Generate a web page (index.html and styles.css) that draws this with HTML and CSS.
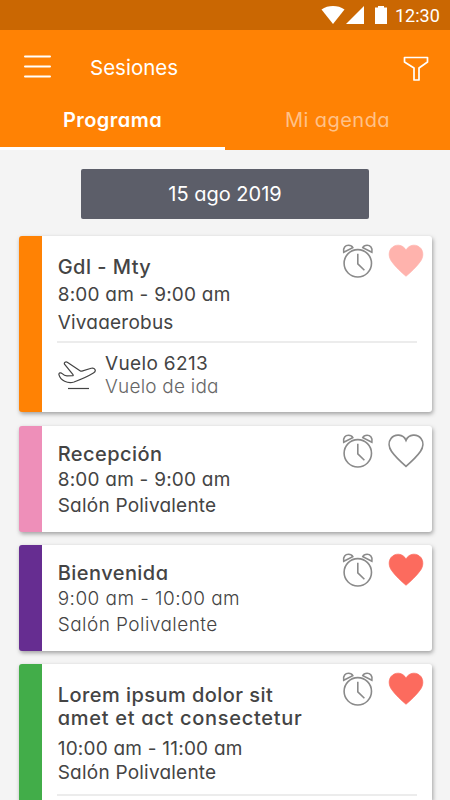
FILE: index.html
```html
<!DOCTYPE html>
<html lang="es">
<head>
    <meta charset="UTF-8">
    <meta name="viewport" content="width=device-width, initial-scale=1.0">
    <title>Sesiones</title>
    <link rel="stylesheet" href="styles.css">
</head>
<body>
    <svg class="sprite" width="0" height="0">
        <symbol id="alarm" viewBox="0 0 32 36">
            <circle cx="15.800" cy="20.300" r="13.700"/>
            <path d="M15.800 10.800v10l6.600 6.500"/>
            <path d="M1.700 9.300C.8 4.700 3.500 2.300 6.500 2.300c2 0 3.600.8 4.300 2.300z"/>
            <path d="M29.900 9.300c.9-4.600-1.800-7-4.800-7-2 0-3.600.8-4.300 2.300z"/>
        </symbol>
        <symbol id="heart" viewBox="0 0 36 34">
            <path d="M18 6.300C15.200 0 6.800-.4 3 4.600c-2.800 3.700-2.200 9 .6 12.900C7.300 22.700 13 28 18 32.300c5-4.300 10.700-9.600 14.400-14.800 2.800-3.900 3.400-9.200.6-12.900C29.200-.4 20.800 0 18 6.300z"/>
        </symbol>
    </svg>

    <div class="status-bar">
        <svg class="wifi" width="24" height="18" viewBox="0 0 24 18"><path d="M12 18L.5 3.500c6.500-4.600 16.500-4.600 23 0z"/></svg>
        <svg class="signal" width="18" height="18" viewBox="0 0 18 18"><path d="M18 0v18H0z"/></svg>
        <svg class="battery" width="12" height="18" viewBox="0 0 12 18"><path d="M0 1.500h3V0h6v1.500h3V18H0z"/></svg>
        <span class="clock">12:30</span>
    </div>

    <header class="header">
        <div class="toolbar">
            <svg class="menu-icon" width="27" height="24" viewBox="0 0 27 24"><path d="M1 1.500h25M1 11.500h25M1 21.500h25"/></svg>
            <h1>Sesiones</h1>
            <svg class="filter-icon" width="26" height="26" viewBox="0 0 26 26"><path d="M1.500 1.500h23v4.500l-8.500 6v12h-5v-12l-9.500-6z"/></svg>
        </div>
        <nav class="tabs">
            <a class="tab active">Programa</a>
            <a class="tab">Mi agenda</a>
        </nav>
    </header>

    <main>
        <div class="date">15 ago 2019</div>

        <article class="card orange flight-card">
            <div class="info">
                <h2>Gdl - Mty</h2>
                <p>8:00 am - 9:00 am</p>
                <p>Vivaaerobus</p>
                <div class="flight">
                    <svg width="40" height="32" viewBox="0 0 40 32"><path d="M7.500 3.200C6.800 1.600 8.700.3 10.300 1.300L23 9.800c.6.4 1.200.5 1.900.3l9.300-2.800c3.500-1 5.800 2.600 2.200 4.800-4.700 2.900-13.400 6.800-19.400 8.900-6.500 2-13.500-1.700-15-7.200-.5-1.900 1.700-2.700 3.200-1.200 1.700 1.800 3 2.300 4.700 2.300l6.100-.2c.4-.2.3-.5 0-1z"/><path d="M11 27.500h21"/></svg>
                    <div>
                        <p class="flight-number">Vuelo 6213</p>
                        <p class="flight-type">Vuelo de ida</p>
                    </div>
                </div>
            </div>
            <div class="actions">
                <svg class="alarm"><use href="#alarm"/></svg>
                <svg class="heart faded"><use href="#heart"/></svg>
            </div>
        </article>

        <article class="card pink">
            <div class="info">
                <h2>Recepción</h2>
                <p>8:00 am - 9:00 am</p>
                <p>Salón Polivalente</p>
            </div>
            <div class="actions">
                <svg class="alarm"><use href="#alarm"/></svg>
                <svg class="heart outline"><use href="#heart"/></svg>
            </div>
        </article>

        <article class="card purple">
            <div class="info">
                <h2>Bienvenida</h2>
                <p>9:00 am - 10:00 am</p>
                <p>Salón Polivalente</p>
            </div>
            <div class="actions">
                <svg class="alarm"><use href="#alarm"/></svg>
                <svg class="heart"><use href="#heart"/></svg>
            </div>
        </article>

        <article class="card green">
            <div class="info">
                <h2>Lorem ipsum dolor sit<br><span class="long-line">amet et act consectetur</span></h2>
                <p>10:00 am - 11:00 am</p>
                <p>Salón Polivalente</p>
                <div class="flight"></div>
            </div>
            <div class="actions">
                <svg class="alarm"><use href="#alarm"/></svg>
                <svg class="heart"><use href="#heart"/></svg>
            </div>
        </article>
    </main>
</body>
</html>
```

FILE: styles.css
```css
* {
    box-sizing: border-box;
}
body {
    margin: 0;
    height: 800px;
    overflow: hidden;
    background: #f4f4f4;
    color: #444;
    font-family: Inter, "Open Sans", sans-serif;
    font-feature-settings: "cv11";
    font-size: 19px;
}
h1, h2, p {
    margin: 0;
}
svg {
    display: block;
    flex: none;
}
.sprite {
    display: none;
}

/* Barra de estado */
.status-bar {
    display: flex;
    align-items: center;
    height: 30px;
    padding-left: 321px;
    background: #ca6702;
    color: #fff;
    fill: #fff;
}
.signal {
    margin-left: 1px;
}
.battery {
    margin-left: 11px;
}
.clock {
    margin-left: 8px;
    font-family: Roboto, sans-serif;
    font-size: 18px;
}

/* Cabecera */
.header {
    height: 120px;
    background: #ff8204;
    color: #fff;
}
.toolbar {
    display: flex;
    height: 60px;
    padding: 25px 20px 0 24px;
}
.menu-icon, .filter-icon {
    fill: none;
    stroke: #fff;
    stroke-width: 2;
    stroke-linejoin: round;
    stroke-linecap: round;
}
.filter-icon {
    margin: 1px 1px 0 auto;
    stroke-width: 1.700;
}
.toolbar h1 {
    margin-left: 39px;
    font-size: 20.500px;
    font-weight: 400;
    line-height: 25px;
}
.tabs {
    display: flex;
    height: 60px;
}
.tab {
    width: 50%;
    padding-top: 17px;
    font-size: 20px;
    line-height: 26px;
    text-align: center;
    color: #ffc188;
    letter-spacing: 0.450px;
}
.tab.active {
    color: #fff;
    font-weight: 600;
    border-bottom: 3px solid #fff;
}

/* Sesiones */
.date {
    width: 288px;
    height: 50px;
    margin: 18.500px auto 17.500px 81px;
    border-radius: 2px;
    background: #5c5e69;
    color: #fff;
    font-size: 20px;
    line-height: 51px;
    text-align: center;
}
.card {
    display: flex;
    width: 412.500px;
    height: 106px;
    margin: 0 0 13px 19px;
    border-left: 23px solid;
    border-radius: 3px;
    background: #fff;
    box-shadow: 1px 2px 4px rgba(0, 0, 0, 0.35);
}
.orange { border-color: #ff8204; }
.pink { border-color: #ee8fb9; }
.purple { border-color: #662d91; }
.green { border-color: #42ad49; }
.info {
    flex: none;
    width: 375px;
    padding: 14.500px 0 0 15px;
    line-height: 26px;
}
.info > h2, .info > p {
    padding-left: 0.700px;
}
.info h2 {
    font-size: 20px;
    font-weight: 500;
    line-height: inherit;
    letter-spacing: 0.450px;
}
.info p {
    letter-spacing: 0.220px;
}
.purple .info p {
    font-weight: 300;
    letter-spacing: 0.450px;
}
.actions {
    display: flex;
    flex: none;
    gap: 14px;
    padding-top: 7px;
    margin-left: -75px;
}
.alarm {
    width: 32px;
    height: 36px;
    fill: none;
    stroke: #8a8a8a;
    stroke-width: 1.600;
}
.heart {
    width: 36px;
    height: 34px;
    margin-top: 0.500px;
    fill: #fc6b5e;
    stroke: #fc6b5e;
    stroke-width: 0.700;
}
.heart.faded {
    fill: #ffb3ad;
    stroke: #ffb3ad;
}
.heart.outline {
    fill: none;
    stroke: #8a8a8a;
    stroke-width: 1.700;
}
.flight-card {
    height: 176px;
    margin-bottom: 14px;
}
.flight-card .info {
    padding-top: 17.500px;
    line-height: 27.500px;
}
.flight {
    display: flex;
    gap: 8px;
    margin-top: 5px;
    padding-top: 9px;
    border-top: 2px solid #ececec;
    line-height: 23px;
}
.flight svg {
    margin-top: 9px;
    fill: none;
    stroke: #444;
    stroke-width: 1.200;
}
.info .flight-number {
    font-size: 19px;
    letter-spacing: 0.350px;
}
.info .flight-type {
    font-weight: 300;
    color: #666;
}
.green {
    height: 136px;
    margin-bottom: 0;
    border-bottom-left-radius: 0;
    border-bottom-right-radius: 0;
}
.green .info {
    padding-top: 20px;
    line-height: 24px;
}
.green h2 {
    margin-bottom: 7px;
    line-height: 23px;
}
.long-line {
    letter-spacing: 0.700px;
}
.green .flight {
    margin-top: 9px;
    padding: 0;
}
```
